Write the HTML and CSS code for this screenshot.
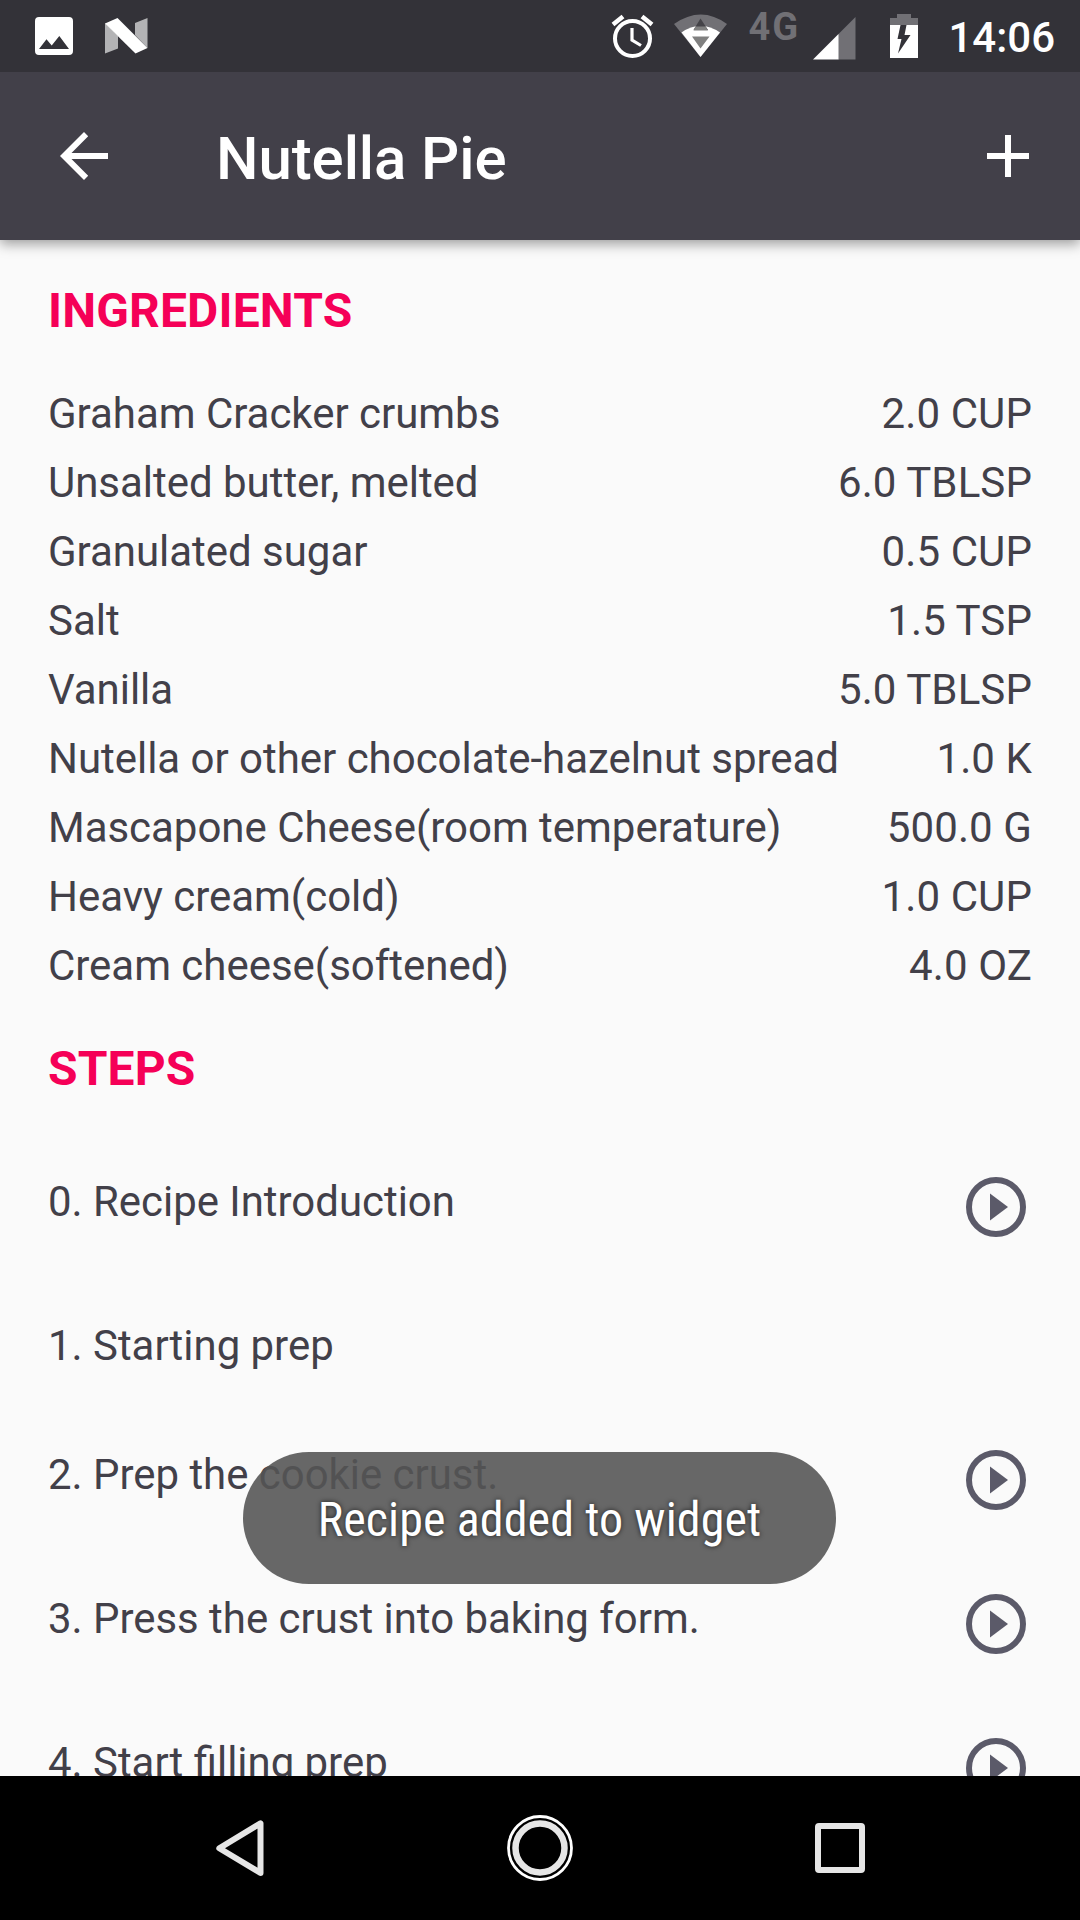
FILE: index.html
```html
<!DOCTYPE html>
<html lang="en">
<head>
<meta charset="utf-8">
<title>Nutella Pie</title>
<link rel="stylesheet" href="styles.css">
</head>
<body>
<div class="screen">
  <div class="status-bar">
    <div class="status-left">
      <svg class="icon-photo" width="38" height="38" viewBox="0 0 38 38"><path fill="#fff" fill-rule="evenodd" d="M4 0H34Q38 0 38 4V34Q38 38 34 38H4Q0 38 0 34V4Q0 0 4 0ZM4 32H34L24.300 19L16.700 28.500L11.500 22.300Z"/></svg>
      <svg class="icon-nougat" width="43" height="36" viewBox="0 0 43 36"><path fill="#b3b3b5" d="M0 5L13 18V30.500L0 35.500ZM30 5L42.500 0V30L30 17Z"/><path fill="#fff" d="M0 5.500L12.500 0L42.500 30L30.500 35.500Z"/></svg>
    </div>
    <div class="status-right">
      <svg class="icon-alarm" width="44" height="44" viewBox="0 0 44 44" fill="none" stroke="#fff"><circle cx="21.500" cy="24.500" r="17.500" stroke-width="4"/><path stroke-width="3.200" d="M21 14V26L30 31.500"/><path stroke-width="4.500" d="M2 10.500L12 2.500M31 2.500L41 10.500"/></svg>
      <svg class="icon-wifi" width="54" height="44" viewBox="0 0 54 44"><path fill="#717075" d="M0 10Q27 -9 53 10L26.500 43Z"/><path fill="#fff" d="M7.500 18.500Q26.500 5 46 18.500L26.500 43Z"/><path fill="#444348" d="M26.500 4.500L34 16H19.500Z"/><path fill="#808080" d="M21.500 12.500H31.500L34 16.500H19.500ZM18 22.500H35.500L26.500 34.500Z"/></svg>
      <span class="network">4G</span>
      <svg class="icon-signal" width="43" height="43" viewBox="0 0 43 43"><path fill="#717075" d="M42.500 0V42.500H25V17.500Z"/><path fill="#fff" d="M0 42.500L25.500 17V42.500Z"/></svg>
      <svg class="icon-battery" width="28" height="44" viewBox="0 0 28 44"><path fill="#717075" d="M7 0H21V4H28V11H0V4H7Z"/><path fill="#fff" d="M0 11H28V44H0Z"/><path fill="#333238" d="M10.500 11H16.500L14.500 21H20.500L8 39.500L11.500 25H7.500Z"/></svg>
      <span class="clock">14:06</span>
    </div>
  </div>
  <header class="app-bar">
    <svg class="icon-back" width="48" height="48" viewBox="0 0 48 48"><path fill="#fff" d="M48 21H11.500L28.200 4.200L24 0L0 24L24 48L28.200 43.800L11.500 27H48Z"/></svg>
    <h1 class="title">Nutella Pie</h1>
    <svg class="icon-add" width="42" height="42" viewBox="0 0 42 42"><path fill="#fff" d="M18 0H24V18H42V24H24V42H18V24H0V18H18Z"/></svg>
  </header>
  <main class="content">
    <h2 class="heading">INGREDIENTS</h2>
    <ul class="ingredients">
      <li class="ingredient"><span>Graham Cracker crumbs</span><span class="quantity">2.0 CUP</span></li>
      <li class="ingredient"><span>Unsalted butter, melted</span><span class="quantity">6.0 TBLSP</span></li>
      <li class="ingredient"><span>Granulated sugar</span><span class="quantity">0.5 CUP</span></li>
      <li class="ingredient"><span>Salt</span><span class="quantity">1.5 TSP</span></li>
      <li class="ingredient"><span>Vanilla</span><span class="quantity">5.0 TBLSP</span></li>
      <li class="ingredient"><span>Nutella or other chocolate-hazelnut spread</span><span class="quantity">1.0 K</span></li>
      <li class="ingredient"><span>Mascapone Cheese(room temperature)</span><span class="quantity">500.0 G</span></li>
      <li class="ingredient"><span>Heavy cream(cold)</span><span class="quantity">1.0 CUP</span></li>
      <li class="ingredient"><span>Cream cheese(softened)</span><span class="quantity">4.0 OZ</span></li>
    </ul>
    <h2 class="heading heading-steps">STEPS</h2>
    <ul class="steps">
      <li class="step"><span>0. Recipe Introduction</span><svg class="icon-play" width="60" height="60" viewBox="0 0 60 60"><circle cx="30" cy="30" r="27" fill="none" stroke="#5b5a69" stroke-width="6"/><path fill="#5b5a69" d="M24 16.500L42 30L24 43.500Z"/></svg></li>
      <li class="step step-plain"><span>1. Starting prep</span></li>
      <li class="step"><span>2. Prep the cookie crust.</span><svg class="icon-play" width="60" height="60" viewBox="0 0 60 60"><circle cx="30" cy="30" r="27" fill="none" stroke="#5b5a69" stroke-width="6"/><path fill="#5b5a69" d="M24 16.500L42 30L24 43.500Z"/></svg></li>
      <li class="step"><span>3. Press the crust into baking form.</span><svg class="icon-play" width="60" height="60" viewBox="0 0 60 60"><circle cx="30" cy="30" r="27" fill="none" stroke="#5b5a69" stroke-width="6"/><path fill="#5b5a69" d="M24 16.500L42 30L24 43.500Z"/></svg></li>
      <li class="step"><span>4. Start filling prep</span><svg class="icon-play" width="60" height="60" viewBox="0 0 60 60"><circle cx="30" cy="30" r="27" fill="none" stroke="#5b5a69" stroke-width="6"/><path fill="#5b5a69" d="M24 16.500L42 30L24 43.500Z"/></svg></li>
    </ul>
  </main>
  <nav class="nav-bar">
    <svg width="66" height="66" viewBox="0 0 66 66"><path fill="none" stroke="#e6e6e6" stroke-width="6" stroke-linejoin="round" d="M53.500 8.300V58L12.300 33.200Z"/></svg>
    <svg width="66" height="66" viewBox="0 0 66 66" fill="none"><circle cx="33" cy="33" r="31.500" stroke="#fff" stroke-width="2.800"/><circle cx="33" cy="33" r="24.500" stroke="#e6e6e6" stroke-width="6.500"/></svg>
    <svg width="66" height="66" viewBox="0 0 66 66"><rect x="11" y="11" width="44" height="44" rx="1" fill="none" stroke="#e6e6e6" stroke-width="6"/></svg>
  </nav>
  <div class="toast"><span class="toast-text">Recipe added to widget</span></div>
</div>
</body>
</html>
```
FILE: styles.css
```css
* {
  box-sizing: border-box;
}

body,
h1,
h2,
ul {
  margin: 0;
  padding: 0;
}

svg {
  display: block;
  flex: none;
}

.screen {
  position: relative;
  display: flex;
  flex-direction: column;
  width: 1080px;
  height: 1920px;
  overflow: hidden;
  background: #fafafa;
  color: #424049;
  font-family: Roboto, "Liberation Sans", sans-serif;
  font-size: 42px;
}

.status-bar {
  position: relative;
  z-index: 2;
  display: flex;
  justify-content: space-between;
  flex: none;
  height: 72px;
  padding: 0 25px 0 35px;
  background: #333238;
  color: #fff;
}

.status-left,
.status-right {
  display: flex;
  align-items: flex-start;
}

.icon-photo {
  margin-top: 17px;
}

.icon-nougat {
  margin: 18px 0 0 32px;
}

.icon-alarm {
  margin-top: 14px;
}

.icon-wifi {
  margin: 14px 0 0 19px;
}

.network {
  width: 52px;
  margin: 4px 0 0 20px;
  color: #717075;
  font-size: 38px;
  font-weight: 700;
  letter-spacing: 2px;
  line-height: 46px;
}

.icon-signal {
  margin: 17px 0 0 13px;
}

.icon-battery {
  margin: 14px 0 0 34px;
}

.clock {
  margin: 13px 0 0 30px;
  font-weight: 500;
  line-height: 50px;
}

.app-bar {
  position: relative;
  z-index: 1;
  display: flex;
  align-items: center;
  flex: none;
  height: 168px;
  padding: 0 51px 0 60px;
  background: #424049;
  box-shadow: 0 4px 12px rgba(0, 0, 0, 0.38);
  color: #fff;
}

.title {
  flex: 1;
  margin-left: 108px;
  padding-top: 6px;
  font-size: 60px;
  font-weight: 500;
  letter-spacing: -0.1px;
  line-height: 70px;
}

.content {
  flex: 1;
  min-height: 0;
  padding: 43px 48px 0;
  overflow: hidden;
}

.heading {
  color: #f50057;
  font-size: 48px;
  font-weight: 700;
  letter-spacing: 0.15px;
  line-height: 56px;
}

.heading-steps {
  margin-top: 41px;
}

.ingredients {
  margin-top: 40px;
  list-style: none;
}

.ingredient {
  display: flex;
  justify-content: space-between;
  letter-spacing: -0.03px;
  line-height: 69px;
}

.quantity {
  letter-spacing: 0.1px;
}

.steps {
  margin-top: 38px;
  list-style: none;
}

.step {
  display: flex;
  align-items: flex-start;
  justify-content: space-between;
  height: 144px;
  padding: 42px 6px 0 0;
  font-size: 41.92px;
  line-height: 50px;
}

.step-plain {
  height: 129px;
}

.nav-bar {
  display: flex;
  align-items: center;
  justify-content: space-between;
  flex: none;
  height: 144px;
  padding: 0 207px;
  background: #000;
}

.toast {
  position: absolute;
  top: 1452px;
  left: 243px;
  display: flex;
  align-items: center;
  justify-content: center;
  width: 593px;
  height: 132px;
  border-radius: 66px;
  background: rgba(84, 84, 84, 0.89);
  color: #fff;
}

.toast-text {
  padding-top: 4px;
  font-family: "Roboto Condensed", Roboto, sans-serif;
  font-size: 48px;
  font-stretch: 75%;
  letter-spacing: 0.1px;
  line-height: 56px;
  white-space: nowrap;
  text-shadow: 0 0 5px rgba(0, 0, 0, 0.73);
}
```
